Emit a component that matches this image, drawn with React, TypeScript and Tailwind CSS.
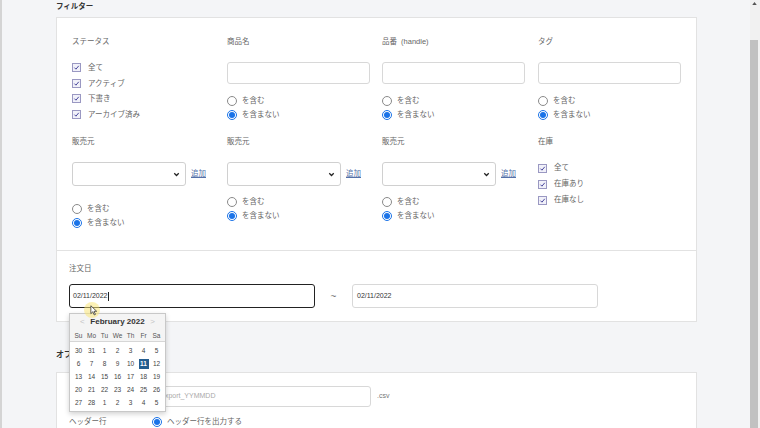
import React from "react";

function Check() {
  return (
    <span className="flex h-[9px] w-[9px] shrink-0 items-center justify-center border border-[#9a98c2] bg-[#f1f1f9]">
      <svg viewBox="0 0 10 10" className="h-[7px] w-[7px]">
        <path d="M2 5.2 L4.2 7.4 L8.2 2.6" fill="none" stroke="#45439a" strokeWidth="1.4" />
      </svg>
    </span>
  );
}

function Radio({ on }: { on?: boolean }) {
  if (on)
    return (
      <span className="flex h-[10px] w-[10px] shrink-0 items-center justify-center rounded-full border border-[#1a73e8] bg-white">
        <span className="h-[6px] w-[6px] rounded-full bg-[#1a73e8]" />
      </span>
    );
  return <span className="h-[10px] w-[10px] shrink-0 rounded-full border border-[#8a8a8a] bg-white" />;
}

function RadioPair({ className = "" }: { className?: string }) {
  return (
    <div className={`flex flex-col ${className}`}>
      {["を含む", "を含まない"].map((t, i) => (
        <div key={t} className="flex h-[14px] items-center gap-[5px] text-[7.5px] text-[#666]">
          <Radio on={i === 1} />
          <span>{t}</span>
        </div>
      ))}
    </div>
  );
}

function CheckList({ items, className = "", row = "h-[15.5px]" }: { items: string[]; className?: string; row?: string }) {
  return (
    <div className={`flex flex-col ${className}`}>
      {items.map((t) => (
        <div key={t} className={`flex items-center gap-[7px] text-[7.5px] text-[#666] ${row}`}>
          <Check />
          <span>{t}</span>
        </div>
      ))}
    </div>
  );
}

function Label({ children }: { children: React.ReactNode }) {
  return <div className="h-[12px] text-[7.5px] leading-[12px] text-[#666]">{children}</div>;
}

function TextBox() {
  return <div className="mt-[14px] h-[22px] w-[143px] rounded-[3px] border border-[#d8d8d8] bg-white" />;
}

function SelectBox() {
  return (
    <div className="mt-[14px] flex items-center gap-[5px]">
      <div className="flex h-[24px] w-[114px] items-center justify-end rounded-[3px] border border-[#d0d0d0] bg-white pr-[5px]">
        <svg viewBox="0 0 10 10" className="h-[7px] w-[7px]">
          <path d="M1.8 3.3 L5 6.5 L8.2 3.3" fill="none" stroke="#222" strokeWidth="1.8" />
        </svg>
      </div>
      <span className="text-[7.5px] text-[#5570a8] underline">追加</span>
    </div>
  );
}

const WEEK = ["Su", "Mo", "Tu", "We", "Th", "Fr", "Sa"];
const DAYS = [
  [30, 31, 1, 2, 3, 4, 5],
  [6, 7, 8, 9, 10, 11, 12],
  [13, 14, 15, 16, 17, 18, 19],
  [20, 21, 22, 23, 24, 25, 26],
  [27, 28, 1, 2, 3, 4, 5],
];

function Calendar() {
  return (
    <div className="absolute left-[69px] top-[313px] w-[97px] border border-[#c8c8c8] bg-white shadow-[0_2px_5px_rgba(0,0,0,0.18)]">
      <div className="border-b border-[#d6d6d6] bg-[#f4f4f4] px-[2px]">
        <div className="flex h-[16px] items-center justify-between px-[8px] text-[8px]">
          <span className="text-[#c4c4c4]">&lt;</span>
          <span className="font-bold text-[#333]">February 2022</span>
          <span className="text-[#c4c4c4]">&gt;</span>
        </div>
        <div className="grid h-[11px] grid-cols-7 items-center text-center text-[6.5px] text-[#555]">
          {WEEK.map((w) => (
            <span key={w}>{w}</span>
          ))}
        </div>
      </div>
      <div className="px-[2px] pb-[2px] pt-[2px]">
        {DAYS.map((r, i) => (
          <div key={i} className="grid h-[13px] grid-cols-7 items-center text-center text-[6.5px] text-[#444]">
            {r.map((d, j) =>
              d === 11 && i === 1 ? (
                <span key={j} className="mx-auto flex h-[10px] w-[10px] items-center justify-center bg-[#245d8f] font-bold text-white">
                  {d}
                </span>
              ) : (
                <span key={j}>{d}</span>
              )
            )}
          </div>
        ))}
      </div>
    </div>
  );
}

export default function App() {
  return (
    <div className="relative flex h-[428px] w-[760px] overflow-hidden bg-[#f4f5f7] [font-family:'Liberation_Sans','Noto_Sans_CJK_JP',sans-serif]">
      <div className="w-[2px] bg-[#d4d4d4]" />
      <div className="flex-1 pl-[54px]">
        <div className="w-[641px]">
          <div className="mt-[1px] mb-[4px] h-[12px] text-[7.5px] font-bold leading-[12px] text-[#333]">フィルター</div>

          <div className="border border-[#e2e2e2] bg-white">
            <div className="h-[233px] border-b border-[#e2e2e2] px-[15px] pt-[18px]">
              <div className="grid h-[100px] grid-cols-[155px_155px_156px_1fr]">
                <div>
                  <Label>ステータス</Label>
                  <CheckList className="mt-[12px]" items={["全て", "アクティブ", "下書き", "アーカイブ済み"]} />
                </div>
                <div>
                  <Label>商品名</Label>
                  <TextBox />
                  <RadioPair className="mt-[10px]" />
                </div>
                <div>
                  <Label>
                    品番 <span className="ml-[2px]">(handle)</span>
                  </Label>
                  <TextBox />
                  <RadioPair className="mt-[10px]" />
                </div>
                <div>
                  <Label>タグ</Label>
                  <TextBox />
                  <RadioPair className="mt-[10px]" />
                </div>
              </div>
              <div className="grid grid-cols-[155px_155px_156px_1fr]">
                <div>
                  <Label>販売元</Label>
                  <SelectBox />
                  <RadioPair className="mt-[16px]" />
                </div>
                <div>
                  <Label>販売元</Label>
                  <SelectBox />
                  <RadioPair className="mt-[9px]" />
                </div>
                <div>
                  <Label>販売元</Label>
                  <SelectBox />
                  <RadioPair className="mt-[9px]" />
                </div>
                <div>
                  <Label>在庫</Label>
                  <CheckList className="mt-[12px]" row="h-[16px]" items={["全て", "在庫あり", "在庫なし"]} />
                </div>
              </div>
            </div>
            <div className="px-[12px] pb-[13px] pt-[12px]">
              <Label>注文日</Label>
              <div className="mt-[9px] flex items-center">
                <div className="flex h-[24px] w-[246px] items-center rounded-[3px] border-[1.5px] border-[#222] px-[3px] text-[7px] text-[#333]">
                  02/11/2022<span className="ml-[0.5px] h-[9px] w-[1px] bg-[#222]" />
                </div>
                <span className="w-[37px] text-center text-[10px] text-[#777]">~</span>
                <div className="flex h-[24px] w-[246px] items-center rounded-[3px] border border-[#d8d8d8] px-[4px] text-[7px] text-[#333]">
                  02/11/2022
                </div>
              </div>
            </div>
          </div>

          <div className="mt-[27px] mb-[11px] h-[12px] text-[8px] font-bold leading-[12px] text-[#333]">オプション</div>

          <div className="h-[80px] border border-[#e2e2e2] bg-white px-[12px] pt-[13px]">
            <div className="flex items-center">
              <div className="w-[83px] text-[7.5px] text-[#666]">ファイル名</div>
              <div className="flex h-[21px] w-[219px] items-center rounded-[3px] border border-[#d8d8d8] px-[8px] text-[7px] text-[#aaa]">
                export_YYMMDD
              </div>
              <span className="ml-[6px] text-[7px] text-[#777]">.csv</span>
            </div>
            <div className="mt-[9px] flex h-[12px] items-center">
              <div className="w-[83px] text-[7.5px] text-[#666]">ヘッダー行</div>
              <div className="flex items-center gap-[5px] text-[7.5px] text-[#666]">
                <Radio on />
                <span>ヘッダー行を出力する</span>
              </div>
            </div>
          </div>
        </div>
      </div>
      <div className="flex w-[8px] flex-col">
        <div className="flex h-[40px] justify-center bg-[#f1f1f1] pt-[2px]">
          <svg viewBox="0 0 6 4" className="h-[3px] w-[5px]">
            <path d="M0 4 L3 0 L6 4 Z" fill="#555" />
          </svg>
        </div>
        <div className="flex-1 bg-[#c1c1c1]" />
      </div>
      <div className="w-[2px] bg-[#f1f1f1]" />

      <Calendar />

      {/* mouse pointer */}
      <div className="absolute left-[84px] top-[302px] h-[16px] w-[16px] rounded-full bg-[rgba(250,230,120,0.55)]" />
      <svg viewBox="0 0 10 14" className="absolute left-[90px] top-[305px] h-[11px] w-[8px]">
        <path d="M1 1 L1 11 L3.5 8.6 L5.3 12.6 L6.8 12 L5 8 L8.4 8 Z" fill="#fff" stroke="#222" strokeWidth="0.9" />
      </svg>
    </div>
  );
}
